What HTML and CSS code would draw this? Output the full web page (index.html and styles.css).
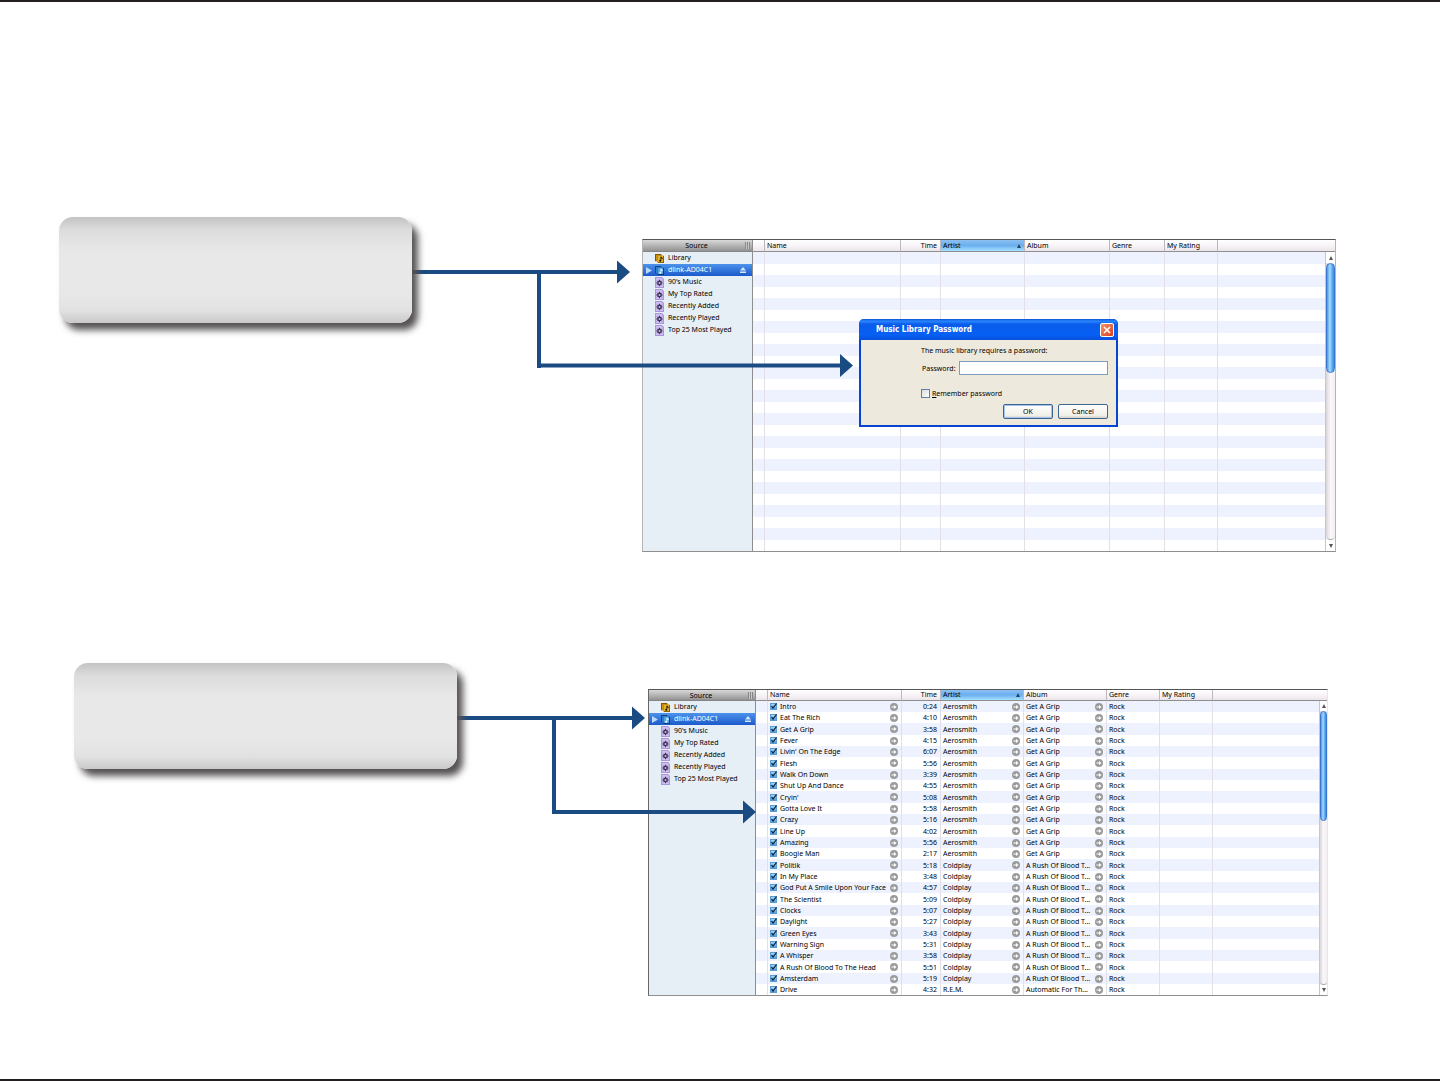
FILE: index.html
```
<!DOCTYPE html>
<html lang="en">
<head>
<meta charset="utf-8">
<title>Shared music library</title>
<link rel="stylesheet" href="styles.css">
</head>
<body>
<svg class="sprite" aria-hidden="true">
  <symbol id="i-library" viewBox="0 0 10 10">
    <path d="M0 0h7v8H0z" fill="#7a5200"/><path d="M1 1h7v7H1z" fill="#c98f10"/>
    <path d="M3 2h7v8H3z" fill="#8a5a00"/><path d="M3 2h6v7H3z" fill="#e3b02a"/>
    <path d="M6.500 3v4.500" stroke="#1c1200" stroke-width=".8" fill="none"/><path d="M6.500 3l2 1.500v1.300l-2-1z" fill="#1c1200"/><circle cx="5.800" cy="7.600" r="1.100" fill="#1c1200"/>
  </symbol>
  <symbol id="i-shared" viewBox="0 0 10 10">
    <path d="M0 0h7v8H0z" fill="#123f86"/><path d="M1 1h7v7H1z" fill="#2f7fca"/>
    <path d="M3 2h7v8H3z" fill="#0c3470"/><path d="M3 2h6v7H3z" fill="#4da3e6"/>
    <path d="M6.500 3v4.500" stroke="#fff" stroke-width=".8" fill="none"/><path d="M6.500 3l2 1.500v1.300l-2-1z" fill="#fff"/><circle cx="5.800" cy="7.600" r="1.100" fill="#fff"/>
  </symbol>
  <symbol id="i-smart" viewBox="0 0 9 11">
    <path d="M0 0h7l2 2v9H0z" fill="#a997dc"/><path d="M1 1h5.500L8 2.500V10H1z" fill="#cdbdf0"/>
    <circle cx="4.500" cy="6" r="1.700" fill="none" stroke="#3d3358" stroke-width="1.400"/>
    <path d="M4.500 2.800v1.400M4.500 7.800v1.400M1.300 6h1.400M6.300 6h1.400M2.300 3.800l.9.9M5.800 7.300l.9.9M2.300 8.200l.9-.9M5.800 4.700l.9-.9" stroke="#3d3358"/>
  </symbol>
  <symbol id="i-go" viewBox="0 0 8 8">
    <circle cx="4" cy="4" r="4" fill="#9b9b9b"/><path d="M1.500 3.500H4V2l2.500 2L4 6V4.500H1.500z" fill="#fff"/>
  </symbol>
</svg>

<section class="step step-password">
  <div class="callout"></div>
  <svg class="connector" viewBox="0 0 230 160" width="230" height="160" aria-hidden="true">
    <path class="line" d="M0 55H206M127 55V148.500H429M127 148V151"/>
    <path class="head" d="M205 43.500l13 11.500-13 11.500zM428 137l13 11.500L428 160z"/>
  </svg>
  <div class="window">
    <nav class="source"></nav>
    <div class="browser">
      <table class="tracks"></table>
      <div class="scrollbar"><button class="up" aria-label="Scroll up"></button><div class="track"><div class="thumb"></div></div><button class="down" aria-label="Scroll down"></button></div>
    </div>
    <form class="dialog">
      <header><h2>Music Library Password</h2>
        <button type="button" class="close" aria-label="Close"><svg viewBox="0 0 12 12"><path d="M3 3l6 6M9 3l-6 6" stroke="#fff" stroke-width="1.600"/></svg></button>
      </header>
      <div class="dialog-body">
        <p>The music library requires a password:</p>
        <div class="field"><label for="pw">Password:</label><input id="pw" type="password"></div>
        <div class="remember"><input id="rem" type="checkbox"><label for="rem"><u>R</u>emember password</label></div>
        <div class="actions"><button type="button" class="default">OK</button><button type="button">Cancel</button></div>
      </div>
    </form>
  </div>
</section>

<section class="step step-tracks">
  <div class="callout"></div>
  <svg class="connector" viewBox="0 0 191 160" width="191" height="160" aria-hidden="true">
    <path class="line" d="M0 55H176M97 55V149H286"/>
    <path class="head" d="M175 43.500l13 11.500-13 11.500zM286 137.500l13 11.500-13 11.500z"/>
  </svg>
  <div class="window">
    <nav class="source"></nav>
    <div class="browser">
      <table class="tracks"></table>
      <div class="scrollbar"><button class="up" aria-label="Scroll up"></button><div class="track"><div class="thumb"></div></div><button class="down" aria-label="Scroll down"></button></div>
    </div>
  </div>
</section>
<script src="app.js"></script>
</body>
</html>
```
FILE: styles.css
```
* { box-sizing: border-box; }

body {
  margin: 0;
  min-height: 100vh;
  padding-top: 215px;
  display: flex;
  flex-direction: column;
  gap: 111px;
  background: #fff;
  border-top: 2px solid #231f20;
  border-bottom: 2px solid #231f20;
  font: 7px/11px "Noto Sans", "DejaVu Sans", sans-serif;
  color: #000;
}

button, input { font: inherit; color: inherit; margin: 0; padding: 0; }
.sprite { display: none; }

/* Steps: callout, connector, window */
.step { display: flex; align-items: flex-start; }
.step-password { padding: 0 104px 0 59px; }
.step-tracks { padding: 0 112px 0 74px; }

.callout {
  position: relative;
  z-index: 3;
  flex: none;
  width: 353px;
  min-height: 106px;
  border-radius: 14px;
  background: linear-gradient(#c3c3c3, #dcdcdc 12%, #e8e8e8 32%, #e8e8e8 72%, #e2e2e2 88%, #c9c9c9);
  box-shadow: 6px 7px 7px #565253;
}
.step-tracks .callout { width: 383px; }

.connector { position: relative; z-index: 2; flex: none; overflow: visible; }
.line { fill: none; stroke: #1a4b82; stroke-width: 4; }
.head { fill: #1a4b82; }

.window {
  position: relative;
  flex: 1;
  display: grid;
  grid-template-columns: 110px 1fr;
  margin-top: 22px;
  border: 1px solid #b4b4b4;
  border-top-color: #555;
  border-bottom-color: #8f8f8f;
}
.step-tracks .window { grid-template-columns: 107px 1fr; margin-top: 26px; border-left-color: #666; border-right-color: #e8e4e8; }

/* Source list */
.source { background: #e6eef6; border-right: 1px solid #8e8e8e; }
.source h3 {
  display: flex;
  justify-content: center;
  position: relative;
  margin: 0;
  height: 12px;
  padding-right: 2px;
  font-size: 7px;
  font-weight: 400;
  line-height: 11px;
  background: linear-gradient(#d9d9d9, #929292);
  border-bottom: 1px solid #858585;
}
.grip { position: absolute; right: 2px; top: 2px; width: 5px; height: 7px; background: repeating-linear-gradient(90deg, #888 0 1px, #c8c8c8 1px 2px); }
.source ul { margin: 0; padding: 0; list-style: none; }
.source a {
  display: flex;
  align-items: center;
  gap: 4px;
  height: 12px;
  padding: 0 6px 0 12px;
  color: #000;
  text-decoration: none;
  line-height: 12px;
}
.source svg { width: 9px; height: 11px; flex: none; }
.source a.selected { padding-left: 3px; gap: 0; color: #fff; background: linear-gradient(#4c93ec, #1b5acb); }
.source .disclosure { width: 6px; height: 7px; margin-right: 3px; }
.source .disclosure + svg { margin-right: 4px; }
.source .eject { width: 6px; height: 6px; margin-left: auto; }
.step-tracks .source h3 { height: 11px; }
.step-tracks .source a { padding-right: 4px; }

/* Track table and its scrollbar */
.browser { display: grid; grid-template-columns: 1fr 10px; grid-template-rows: 12px 1fr; }
.step-tracks .browser { grid-template-columns: 1fr 8px; grid-template-rows: 11px 1fr; }
.tracks { grid-area: 1 / 1 / -1 / -1; width: 100%; table-layout: fixed; border-collapse: separate; border-spacing: 0; }
.tracks th {
  height: 12px;
  padding: 0 3px 0 2px;
  font-weight: 400;
  text-align: left;
  line-height: 10px;
  background: linear-gradient(#fff, #f8f4f8 50%, #ebe5ea);
  border-right: 1px solid #bdb8bd;
  border-bottom: 1px solid #8e8e8e;
}
.step-tracks .tracks th { height: 11px; }
.tracks th:last-child { border-right: 0; }
.tracks th.sorted { background: linear-gradient(#8cc0f2, #6aaeee 50%, #a4e2ff); }
.tracks th.sorted span { float: right; width: 0; height: 0; margin: 3px 0 0; border: 2px solid transparent; border-top: 0; border-bottom: 4px solid #27445e; }
.tracks td { height: 11px; padding: 0 3px 0 2px; border-right: 1px solid #e3dfe6; overflow: hidden; white-space: nowrap; }
.tracks td:last-child { border-right: 0; }
.tracks tbody tr:nth-child(odd) { background: #edf2fe; }
.step-password .tracks tbody tr:nth-child(odd) td { height: 12px; }
.step-tracks .tracks tbody tr:nth-child(3n) td { height: 12px; }
.tracks .time { text-align: right; }
.c-num { width: 12px; }
.c-name { width: 136px; }
.c-time { width: 40px; }
.c-artist { width: 84px; }
.c-album { width: 85px; }
.c-genre { width: 55px; }
.c-rating { width: 53px; }
.step-tracks .c-name { width: 134px; }
.step-tracks .c-time { width: 39px; }
.step-tracks .c-artist, .step-tracks .c-album { width: 83px; }
.step-tracks .c-genre, .step-tracks .c-rating { width: 53px; }

.cell { display: flex; align-items: center; height: 11px; }
.cell button { margin-left: auto; width: 8px; height: 8px; border: 0; background: none; display: flex; }
.cell svg { width: 8px; height: 8px; }
.cell label { display: flex; align-items: center; gap: 3px; }
.check { display: grid; }
.check input, .check svg { grid-area: 1 / 1; width: 7px; height: 7px; }
.check input { appearance: none; border: 1px solid #5c9bd0; background: linear-gradient(#9ed4fa, #4ea1e6); }
.check svg { pointer-events: none; z-index: 1; }

.scrollbar { grid-area: 2 / 2; display: flex; flex-direction: column; background: #f9f6f9; border-left: 1px solid #c9c5c9; }
.scrollbar button { height: 11px; border: 0; background: #fff; display: grid; place-items: center; }
.scrollbar button::before { content: ""; border: 2px solid transparent; border-top: 0; border-bottom: 4px solid #555; }
.scrollbar .down::before { border: 2px solid transparent; border-bottom: 0; border-top: 4px solid #555; }
.track { flex: 1; border-radius: 0 0 5px 5px; border-bottom: 1px solid #aaa; background: linear-gradient(90deg, #d9d5d9, #fbf8fb 50%, #f2eef2); }
.thumb { height: 110px; border-radius: 5px; border: 1px solid #3a78d0; background: linear-gradient(90deg, #4b93e8, #a8dcff 40%, #6bb8f8 65%, #3f86e0); }
.step-tracks .scrollbar button { height: 10px; }

/* Password dialog */
.dialog {
  position: absolute;
  inset: 79px 1px auto 0;
  width: 259px;
  margin: 0 auto;
  border: 2px solid #0545d2;
  border-top: 0;
  border-radius: 5px 5px 0 0;
  background: #ede9dc;
}
.dialog header {
  display: flex;
  align-items: center;
  justify-content: space-between;
  height: 21px;
  margin: 0 -2px;
  padding: 1px 4px 0 17px;
  border-radius: 5px 5px 0 0;
  background: linear-gradient(#0a50cf, #2a86ff 10%, #0a5cea 25%, #0560f5 75%, #0a4fd8);
}
.dialog h2 { margin: 0; font: bold 8px/12px "DejaVu Sans Condensed", "DejaVu Sans", sans-serif; color: #fff; }
.close { width: 14px; height: 14px; border: 1px solid #fff; border-radius: 2px; background: linear-gradient(135deg, #f0936f, #d8401a); display: grid; }
.close svg { width: 12px; height: 12px; }
.dialog-body { padding: 5px 8px 6px 60px; }
.dialog p { margin: 0 0 5px; }
.field { display: flex; align-items: center; justify-content: space-between; }
.field label { padding-left: 1px; }
.field input { width: 149px; height: 14px; border: 1px solid #7f9db9; background: #fff; }
.remember { display: flex; align-items: center; gap: 2px; margin: 13px 0 5px; }
.remember input { appearance: none; width: 9px; height: 9px; border: 1px solid #5a82a8; background: linear-gradient(135deg, #dcdcd7, #fff); }
.actions { display: flex; justify-content: flex-end; gap: 5px; }
.actions button { width: 50px; height: 15px; border: 1px solid #3c6590; border-radius: 2px; background: linear-gradient(#fff, #f0efe8 80%, #d6d0c5); }
.actions .default { box-shadow: inset 0 0 0 1px #a5c3f0; }
```
FILE: app.js
```
const playlists = ["90's Music", "My Top Rated", "Recently Added", "Recently Played", "Top 25 Most Played"];
const grip = "Get A Grip", rush = "A Rush Of Blood T...";
const songs = [
  ["Intro", "0:24"], ["Eat The Rich", "4:10"], ["Get A Grip", "3:58"], ["Fever", "4:15"],
  ["Livin' On The Edge", "6:07"], ["Flesh", "5:56"], ["Walk On Down", "3:39"], ["Shut Up And Dance", "4:55"],
  ["Cryin'", "5:08"], ["Gotta Love It", "5:58"], ["Crazy", "5:16"], ["Line Up", "4:02"],
  ["Amazing", "5:56"], ["Boogie Man", "2:17"]
].map(s => [...s, "Aerosmith", grip]).concat([
  ["Politik", "5:18"], ["In My Place", "3:48"], ["God Put A Smile Upon Your Face", "4:57"], ["The Scientist", "5:09"],
  ["Clocks", "5:07"], ["Daylight", "5:27"], ["Green Eyes", "3:43"], ["Warning Sign", "5:31"],
  ["A Whisper", "3:58"], ["A Rush Of Blood To The Head", "5:51"], ["Amsterdam", "5:19"]
].map(s => [...s, "Coldplay", rush]), [["Drive", "4:32", "R.E.M.", "Automatic For Th..."]]);

const icon = id => `<svg><use href="#${id}"/></svg>`;
const source = `<h3>Source<span class="grip"></span></h3><ul>
  <li><a href="#">${icon("i-library")}Library</a></li>
  <li><a href="#" class="selected"><svg class="disclosure" viewBox="0 0 6 7"><path d="M0 0l6 3.500L0 7z" fill="#b9d6fb"/></svg>${icon("i-shared")}dlink-AD04C1<svg class="eject" viewBox="0 0 6 6"><path d="M3 0l3 3.500H0zM0 4.500h6V6H0z" fill="#d5e6ff"/></svg></a></li>
  ${playlists.map(p => `<li><a href="#">${icon("i-smart")}${p}</a></li>`).join("")}</ul>`;

const head = `<colgroup><col class="c-num"><col class="c-name"><col class="c-time"><col class="c-artist"><col class="c-album"><col class="c-genre"><col class="c-rating"><col></colgroup>
  <thead><tr><th></th><th>Name</th><th class="time">Time</th><th class="sorted">Artist<span></span></th><th>Album</th><th>Genre</th><th>My Rating</th><th></th></tr></thead>`;

const go = `<button aria-label="Show in store">${icon("i-go")}</button>`;
const tick = `<span class="check"><input type="checkbox" checked><svg viewBox="0 0 7 7"><path d="M1.500 3l1.500 2L6.500 .5" stroke="#06182e" stroke-width="1.200" fill="none"/></svg></span>`;
const songRow = ([name, time, artist, album]) => `<tr><td></td>
  <td><div class="cell"><label>${tick}${name}</label>${go}</div></td><td class="time">${time}</td>
  <td><div class="cell">${artist}${go}</div></td><td><div class="cell">${album}${go}</div></td>
  <td>Rock</td><td></td><td></td></tr>`;
const emptyRow = `<tr>${"<td></td>".repeat(8)}</tr>`;

document.querySelectorAll(".source").forEach(el => { el.innerHTML = source; });
document.querySelector(".step-password .tracks").innerHTML = `${head}<tbody>${emptyRow.repeat(songs.length)}</tbody>`;
document.querySelector(".step-tracks .tracks").innerHTML = `${head}<tbody>${songs.map(songRow).join("")}</tbody>`;
```
